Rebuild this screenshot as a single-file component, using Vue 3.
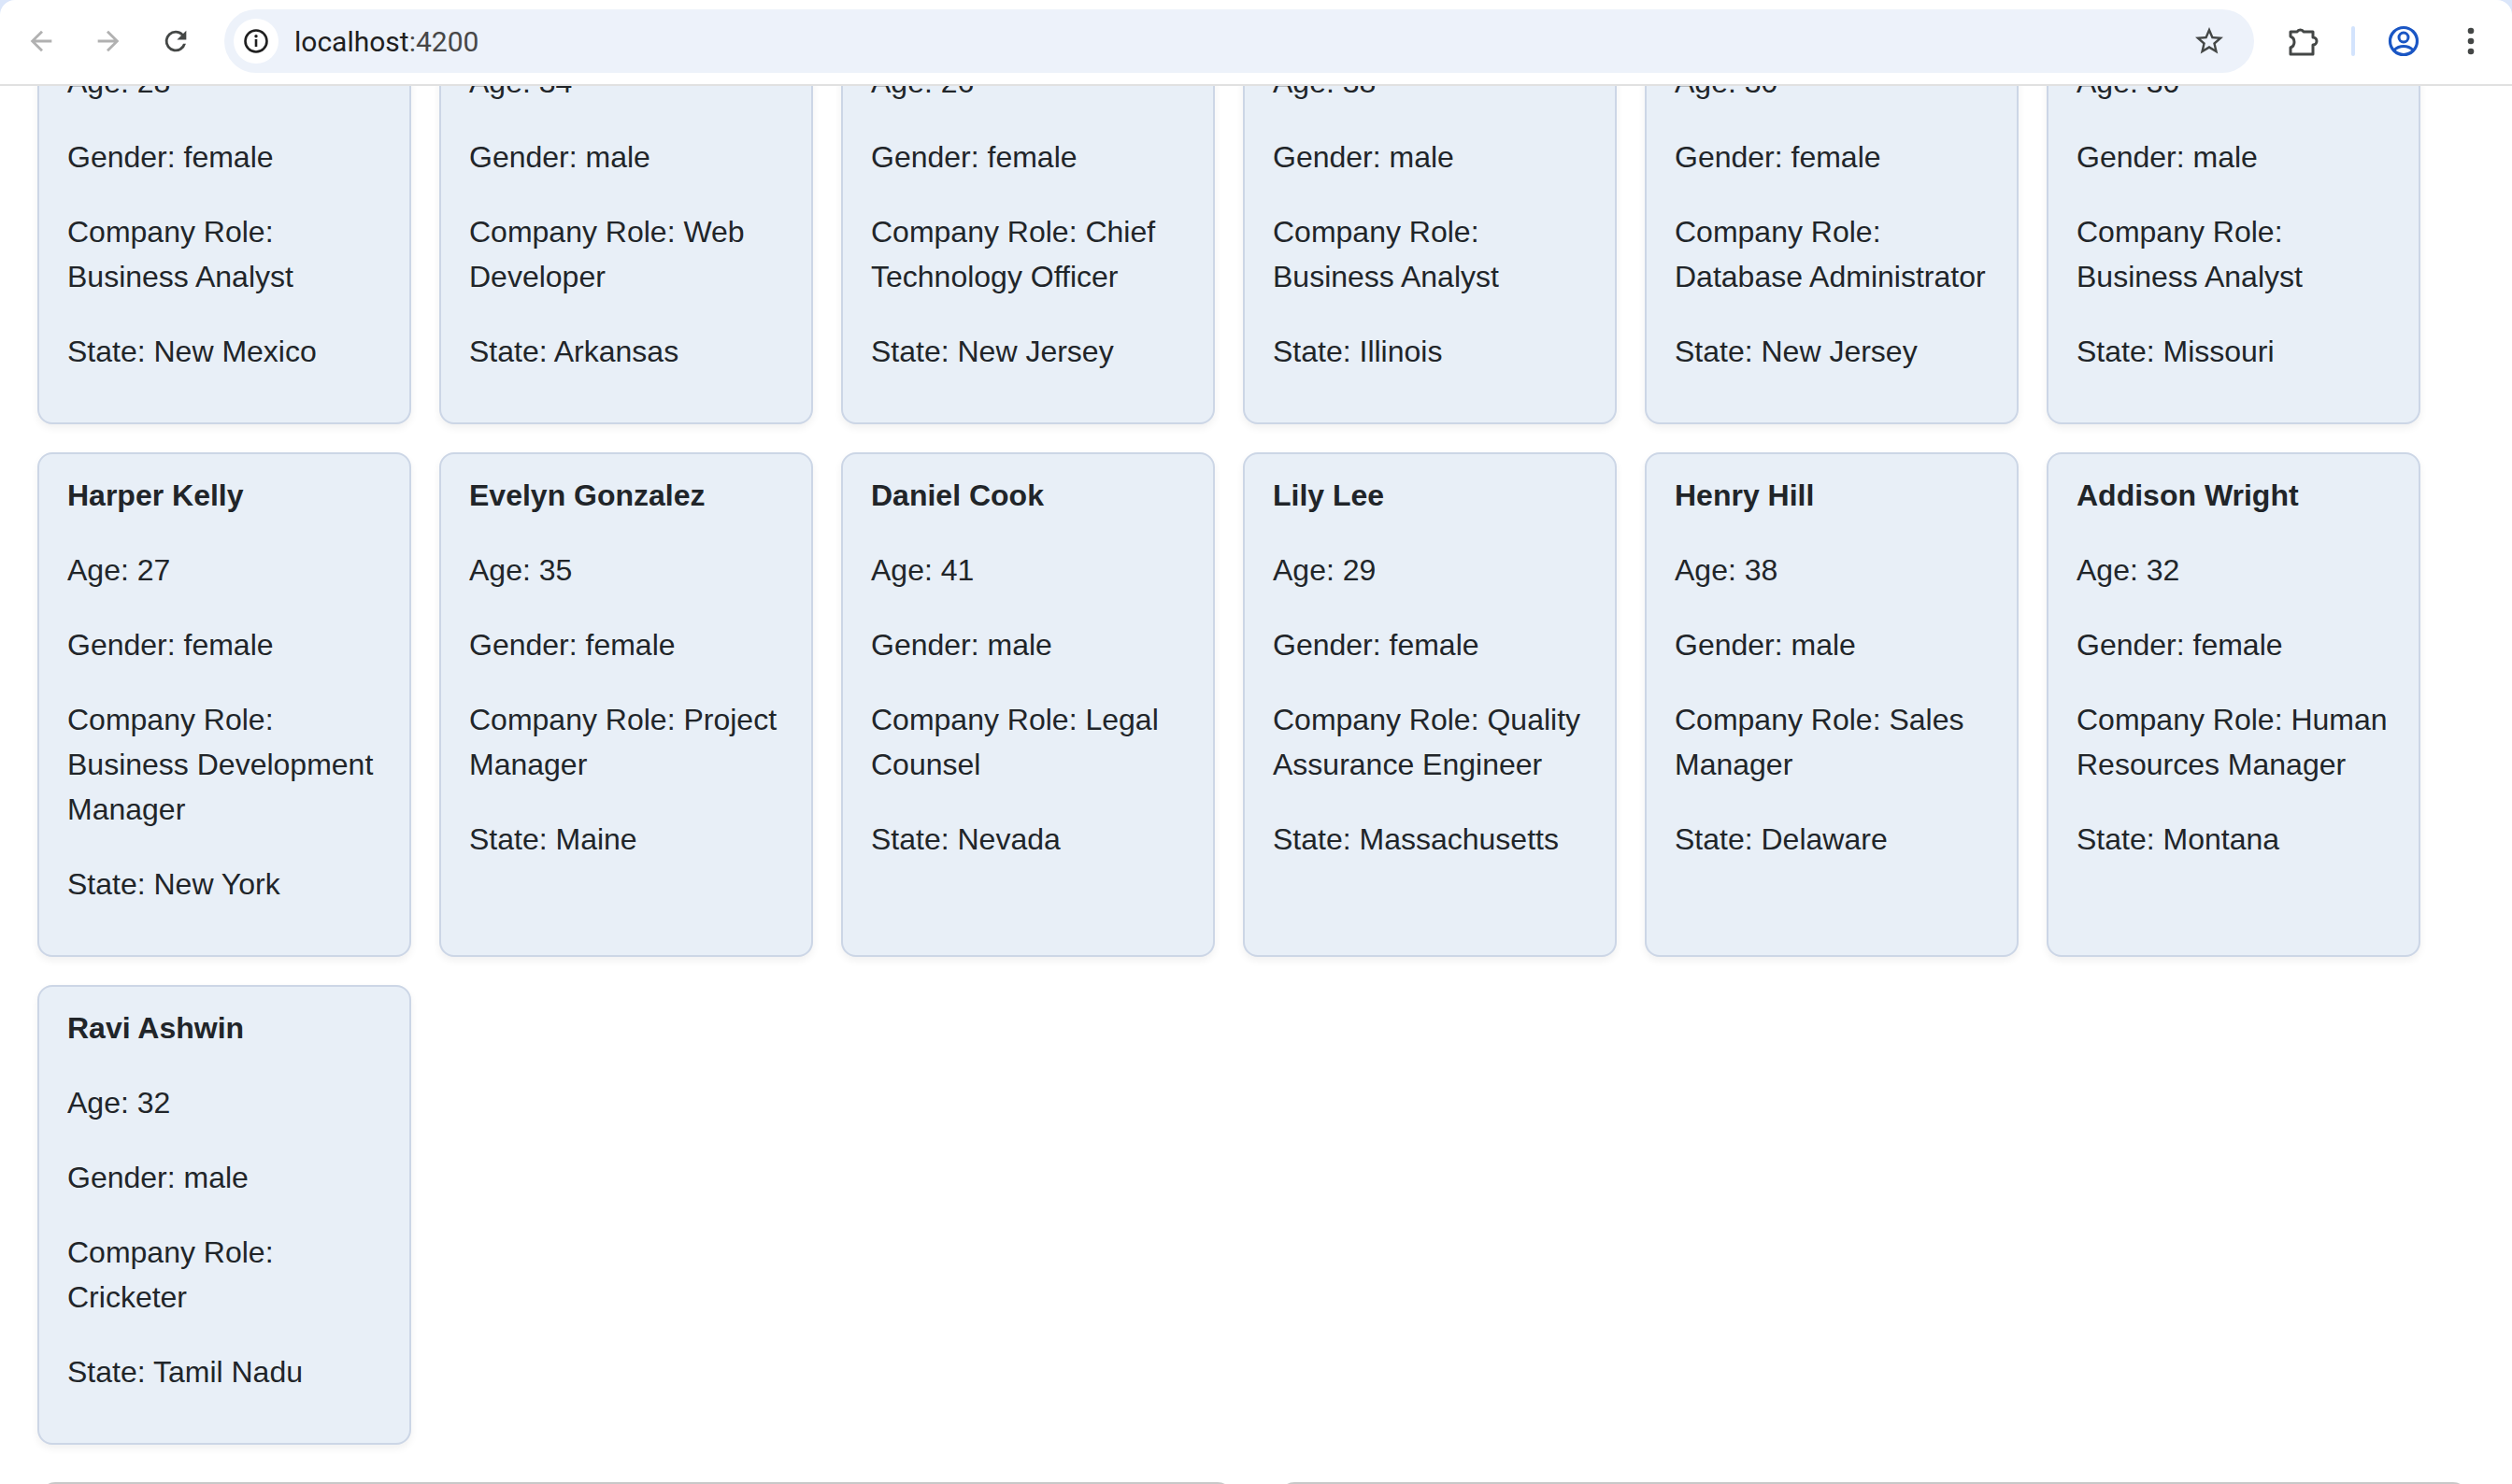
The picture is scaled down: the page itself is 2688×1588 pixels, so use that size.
<template>
  <div class="window">
    <header class="toolbar">
      <button class="tool-btn nav-first">
        <svg viewBox="0 0 24 24" width="34" height="34"><path class="dim" d="M20 11H7.83l5.59-5.59L12 4l-8 8 8 8 1.41-1.41L7.83 13H20v-2z" /></svg>
      </button>
      <button class="tool-btn">
        <svg viewBox="0 0 24 24" width="34" height="34"><path class="dim" d="M4 11h12.17l-5.59-5.59L12 4l8 8-8 8-1.41-1.41L16.17 13H4v-2z" /></svg>
      </button>
      <button class="tool-btn">
        <svg viewBox="0 0 24 24" width="34" height="34"><path class="dark" d="M17.65 6.35A7.95 7.95 0 0 0 12 4a8 8 0 1 0 7.75 10h-2.08A6 6 0 1 1 12 6c1.66 0 3.14.69 4.22 1.78L13 11h7V4l-2.35 2.35z" /></svg>
      </button>

      <div class="omnibox">
        <span class="site-info">
          <svg viewBox="0 0 28 28" width="28" height="28">
            <circle cx="14" cy="14" r="11.5" fill="none" stroke="#1f1f1f" stroke-width="2.6" />
            <rect x="12.7" y="12" width="2.6" height="8" fill="#1f1f1f" />
            <circle cx="14" cy="8.8" r="1.7" fill="#1f1f1f" />
          </svg>
        </span>
        <span class="url">localhost<span class="url-port">:4200</span></span>
        <span class="star">
          <svg viewBox="0 0 24 24" width="36" height="36"><path class="dark" d="M22 9.24l-7.19-.62L12 2 9.19 8.63 2 9.24l5.46 4.73L5.82 21 12 17.27 18.18 21l-1.63-7.03L22 9.24zM12 15.4l-3.76 2.27 1-4.28-3.32-2.88 4.38-.38L12 6.1l1.71 4.04 4.38.38-3.32 2.88 1 4.28L12 15.4z" /></svg>
        </span>
      </div>

      <button class="tool-btn ext-btn">
        <svg viewBox="0 0 34 34" width="34" height="34">
          <path d="M3 7H10A4 4 0 0 1 17 7H27V13A4 4 0 0 1 27 21V31H3V24A6.5 6.5 0 0 0 3 12Z" fill="none" stroke="#444746" stroke-width="3" stroke-linejoin="round" />
        </svg>
      </button>
      <span class="divider"></span>
      <button class="tool-btn profile-btn">
        <svg viewBox="0 0 34 34" width="34" height="34">
          <circle cx="17" cy="17" r="14.5" fill="none" stroke="#1a56c4" stroke-width="3.2" />
          <circle cx="17" cy="13" r="5" fill="none" stroke="#1a56c4" stroke-width="3" />
          <path d="M7 26.5C10 23.5 13.5 22.5 17 22.5S24 23.5 27 26.5" fill="none" stroke="#1a56c4" stroke-width="3" />
        </svg>
      </button>
      <button class="tool-btn">
        <svg viewBox="0 0 34 34" width="34" height="34">
          <circle cx="17" cy="6" r="3.3" fill="#444746" />
          <circle cx="17" cy="17" r="3.3" fill="#444746" />
          <circle cx="17" cy="28" r="3.3" fill="#444746" />
        </svg>
      </button>
    </header>

    <main class="page">
      <section class="employee-grid">
        <article v-for="person in people" :key="person.name" class="employee-card">
          <p class="employee-name">{{ person.name }}</p>
          <p>Age: {{ person.age }}</p>
          <p>Gender: {{ person.gender }}</p>
          <p>Company Role: {{ person.role }}</p>
          <p>State: {{ person.state }}</p>
        </article>
      </section>

      <section class="panels">
        <div class="panel panel-left"></div>
        <div class="panel panel-right"></div>
      </section>
    </main>
  </div>
</template>

<script setup>
const people = [
  { name: 'Sophia Turner', age: 28, gender: 'female', role: 'Business Analyst', state: 'New Mexico' },
  { name: 'Liam Parker', age: 34, gender: 'male', role: 'Web Developer', state: 'Arkansas' },
  { name: 'Ava Morgan', age: 26, gender: 'female', role: 'Chief Technology Officer', state: 'New Jersey' },
  { name: 'Noah Reed', age: 38, gender: 'male', role: 'Business Analyst', state: 'Illinois' },
  { name: 'Mia Bennett', age: 30, gender: 'female', role: 'Database Administrator', state: 'New Jersey' },
  { name: 'Owen Ward', age: 30, gender: 'male', role: 'Business Analyst', state: 'Missouri' },
  { name: 'Harper Kelly', age: 27, gender: 'female', role: 'Business Development Manager', state: 'New York' },
  { name: 'Evelyn Gonzalez', age: 35, gender: 'female', role: 'Project Manager', state: 'Maine' },
  { name: 'Daniel Cook', age: 41, gender: 'male', role: 'Legal Counsel', state: 'Nevada' },
  { name: 'Lily Lee', age: 29, gender: 'female', role: 'Quality Assurance Engineer', state: 'Massachusetts' },
  { name: 'Henry Hill', age: 38, gender: 'male', role: 'Sales Manager', state: 'Delaware' },
  { name: 'Addison Wright', age: 32, gender: 'female', role: 'Human Resources Manager', state: 'Montana' },
  { name: 'Ravi Ashwin', age: 32, gender: 'male', role: 'Cricketer', state: 'Tamil Nadu' },
];
</script>

<style>
html,
body {
  margin: 0;
  background: #dbe6fa;
}
</style>

<style scoped>
.window {
  height: 1588px;
  display: flex;
  flex-direction: column;
  overflow: hidden;
  font-family: "Liberation Sans", Arial, sans-serif;
  background: #dbe6fa;
}

.toolbar {
  flex: none;
  height: 88px;
  padding-bottom: 2px;
  display: flex;
  align-items: center;
  background: #fff;
  border-radius: 16px 16px 0 0;
  border-bottom: 2px solid #e1e1e1;
  position: relative;
  z-index: 1;
}

.tool-btn {
  flex: none;
  width: 72px;
  height: 68px;
  padding: 0;
  border: 0;
  background: none;
  display: flex;
  align-items: center;
  justify-content: center;
}

.nav-first {
  margin-left: 8px;
}

.dim {
  fill: #b1b1b1;
}

.dark {
  fill: #444746;
}

.omnibox {
  flex: none;
  width: 2172px;
  height: 68px;
  margin-left: 16px;
  display: flex;
  align-items: center;
  background: #edf2fa;
  border-radius: 34px;
}

.site-info {
  flex: none;
  width: 48px;
  height: 48px;
  margin-left: 10px;
  display: flex;
  align-items: center;
  justify-content: center;
  background: #fff;
  border-radius: 50%;
}

.url {
  margin-left: 17px;
  font-family: Roboto, "Liberation Sans", sans-serif;
  font-size: 30px;
  color: #1f1f1f;
}

.url-port {
  color: #474747;
}

.star {
  margin-left: auto;
  margin-right: 30px;
  width: 36px;
  height: 36px;
  display: flex;
}

.ext-btn {
  margin-left: 17px;
}

.divider {
  flex: none;
  width: 4px;
  height: 32px;
  margin-left: 15px;
  background: #d3e3fd;
  border-radius: 2px;
}

.profile-btn {
  margin-left: 16px;
}

.page {
  flex: 1;
  min-height: 0;
  overflow: hidden;
  background: #fff;
}

.employee-grid {
  display: grid;
  grid-template-columns: repeat(6, 400px);
  gap: 30px;
  margin-top: -130px;
  padding-left: 40px;
}

.employee-card {
  box-sizing: border-box;
  padding: 20px 30px;
  background: #e8eff7;
  border: 2px solid #ccd6e6;
  border-radius: 16px;
  box-shadow: 0 4px 8px rgba(0, 0, 0, 0.06);
  font-size: 32px;
  line-height: 48px;
  color: #212529;
}

.employee-card p {
  margin: 0 0 32px;
}

.employee-card .employee-name {
  font-weight: 700;
}

.panels {
  display: flex;
  gap: 50px;
  margin-top: 40px;
  padding-left: 43px;
}

.panel {
  flex: none;
  box-sizing: border-box;
  height: 60px;
  background: #fff;
  border: 2px solid #c8c8c8;
  border-radius: 16px;
}

.panel-left {
  width: 1276px;
}

.panel-right {
  width: 1272px;
}
</style>
